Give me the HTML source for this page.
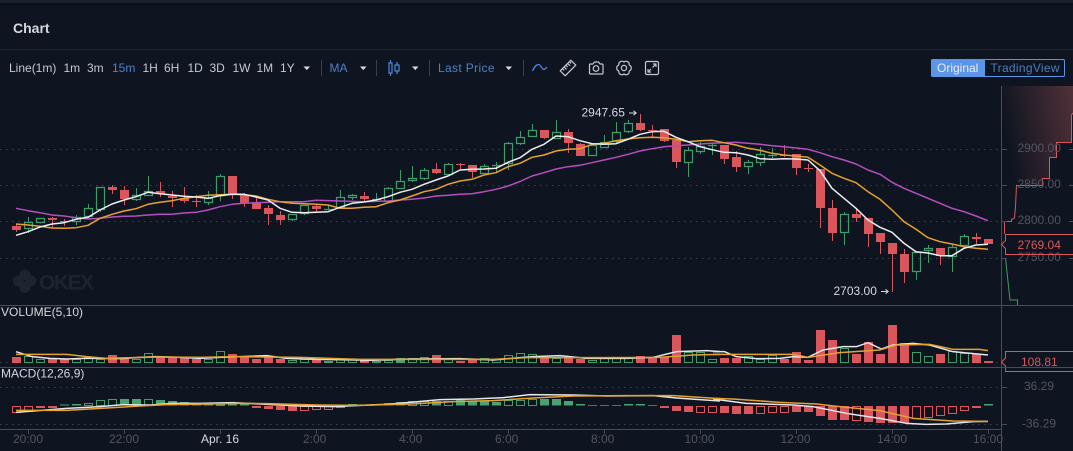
<!DOCTYPE html>
<html><head><meta charset="utf-8"><title>Chart</title>
<style>
html,body{margin:0;padding:0;background:#0f1520;width:1073px;height:451px;overflow:hidden}
svg{display:block}
text{font-family:"Liberation Sans",sans-serif;font-size:12px}
</style></head><body>
<svg width="1073" height="451" viewBox="0 0 1073 451" xmlns="http://www.w3.org/2000/svg">
<defs><linearGradient id="dg" gradientUnits="userSpaceOnUse" x1="1004" y1="125" x2="1073" y2="112"><stop offset="0" stop-color="#0f1520"/><stop offset="1" stop-color="#4d2f38"/></linearGradient></defs>
<rect width="1073" height="451" fill="#0f1520"/>
<rect width="1073" height="3" fill="#182130"/>
<rect y="3" width="1073" height="2" fill="#0c1119"/>
<rect y="49" width="1073" height="1" fill="#1e2532"/>
<text x="13" y="33" fill="#d5d8de" style="font-size:14px;font-weight:bold">Chart</text>

<!-- toolbar -->
<g fill="#c4c8cf">
<text x="9" y="72">Line(1m)</text><text x="63.5" y="72">1m</text><text x="87" y="72">3m</text>
<text x="112" y="72" fill="#4d80c8">15m</text><text x="142.5" y="72">1H</text><text x="164" y="72">6H</text>
<text x="187.5" y="72">1D</text><text x="209.5" y="72">3D</text><text x="232.5" y="72">1W</text><text x="256.5" y="72">1M</text><text x="280" y="72">1Y</text>
<text x="329.5" y="72" fill="#4d80c8">MA</text>
<text x="438" y="72" fill="#4d80c8" textLength="56.5">Last Price</text>
</g>
<g fill="#d8dbe0"><path d="M303.5 66.5h6.5l-3.2 3.6z"/><path d="M360 66.5h6.5l-3.2 3.6z"/><path d="M412 66.5h6.5l-3.2 3.6z"/><path d="M505.5 66.5h6.5l-3.2 3.6z"/></g>
<path d="M321.5 60v16M376.5 60v16M429.5 60v16M523.5 60v16" stroke="#3a404b" fill="none"/>
<g fill="none" stroke="#4d88d8" stroke-width="1.2">
<path d="M390.5 60v3M390.5 73v3M397 62v3M397 71v3"/><rect x="389" y="63" width="3" height="10"/><rect x="395" y="65" width="4" height="6"/>
<path d="M532.5 71C535 66 536.500 64.500 538.500 64.500C541 64.500 542 70 544 69.500C545.500 69 546 68 547 67" stroke-width="1.300"/>
</g>
<g fill="none" stroke="#c4c8cf" stroke-width="1.200" stroke-linejoin="round">
<g transform="rotate(-45 568 68)"><rect x="560.500" y="64.500" width="15" height="7"/><path d="M563.500 64.500v2.500M566 64.500v3.500M568.500 64.500v2.500M571 64.500v3.500M573.500 64.500v2.500"/></g>
<path d="M590.500 64h2.500l1.500-2h4l1.500 2h2a1 1 0 0 1 1 1v8a1 1 0 0 1-1 1h-11.500a1 1 0 0 1-1-1v-8a1 1 0 0 1 1-1z"/><circle cx="596" cy="68.500" r="2.800"/>
<path d="M624 62A3.200 3.200 0 0 1 629.200 65A3.200 3.200 0 0 1 629.200 71A3.200 3.200 0 0 1 624 74A3.200 3.200 0 0 1 618.800 71A3.200 3.200 0 0 1 618.800 65A3.200 3.200 0 0 1 624 62Z"/><circle cx="624" cy="68" r="2.600"/>
<rect x="645.500" y="61.500" width="13" height="13" rx="1.500"/><path d="M652.500 67.500l3.500-3.500M653 64h3v3M651 69l-3 3M648 69v3h3"/>
</g>

<!-- toggle -->
<rect x="931.500" y="59.500" width="133" height="17" rx="1.500" fill="none" stroke="#5a95e8"/>
<path d="M933 59h52v18h-52a2 2 0 0 1-2-2v-14a2 2 0 0 1 2-2z" fill="#5a95e8"/>
<text x="937" y="72" fill="#e8edf5">Original</text>
<text x="990.500" y="72" fill="#4d7cc0" textLength="69">TradingView</text>

<!-- grid -->
<g stroke="#3c424d" stroke-dasharray="1.500 4.500" fill="none">
<path d="M0 149.500H1001M0 185.500H1001M0 221.500H1001M0 258.500H1001M0 362.500H1001M0 387.500H1001M0 424.500H1001"/>
</g>

<!-- watermark -->
<g fill="#1e242f"><circle cx="25" cy="275" r="5.500"/><circle cx="18.500" cy="281" r="5.500"/><circle cx="31" cy="281" r="5.500"/><circle cx="25" cy="287.500" r="5.500"/></g>
<text x="39" y="289.500" fill="#1e242f" style="font-size:21px;font-weight:bold" textLength="55">OKEX</text>

<!-- depth -->
<path d="M1002 86H1073V113L1071.300 115V142.300H1056.700V157.700H1049V178.300H1042V185.700H1016.300L1016 206.700L1015 218L1011.700 219.300V221.300H1002Z" fill="url(#dg)"/>
<path d="M1004.500 234V221.500H1011.500V219.500L1014.500 218L1015.500 206.500L1016.500 185.500H1042.500V178.500H1049.500V157.500H1056.500V142.500H1071.500V115L1073 113" fill="none" stroke="#d9565c"/>
<path d="M1005.500 258L1007.500 277L1010 300H1017.500V305" fill="none" stroke="#3f9c68"/>

<!-- axes -->
<path d="M0 305.500H1073M0 367.500H1073M0 429.500H1001.500M1001.500 86V451" stroke="#474c56" fill="none"/>
<path d="M1001 149.500h6M1001 185.500h6M1001 221.500h6M1001 258.500h6M1001 387.500h6M1001 424.500h6M1069 149.500h4M1069 185.500h4M1069 221.500h4M1069 258.500h4M28.500 430v4M124.500 430v4M220.500 430v4M316.500 430v4M412.500 430v4M508.500 430v4M604.500 430v4M700.500 430v4M796.500 430v4M892.500 430v4M988.500 430v4" stroke="#474c56" fill="none"/>
<g fill="#50555f">
<text x="1017.500" y="152">2900.00</text><text x="1017.500" y="188">2850.00</text><text x="1017.500" y="224">2800.00</text><text x="1017.500" y="261">2750.00</text>
<text x="1024" y="390">36.29</text><text x="1022" y="427.500">-36.29</text>
<text x="13" y="443">20:00</text><text x="109" y="443">22:00</text><text x="303" y="443">2:00</text><text x="399" y="443">4:00</text><text x="495" y="443">6:00</text><text x="591" y="443">8:00</text><text x="684.500" y="443">10:00</text><text x="780.500" y="443">12:00</text><text x="877" y="443">14:00</text><text x="973" y="443">16:00</text>
</g>
<text x="201" y="443" fill="#d5d8de">Apr. 16</text>

<!-- candles -->
<path fill="#d9565c" d="M12 226h9v4h-9zM48 218h9v2h-9zM60 221h9v1h-9zM108 187h9v3h-9zM120 190h9v9h-9zM156 191h9v3h-9zM168 196h9v2h-9zM180 198h9v3h-9zM192 201h9v1h-9zM228 176h9v18h-9zM240 195h9v8h-9zM252 203h9v6h-9zM264 208h9v6h-9zM276 215h9v5h-9zM312 206h9v3h-9zM360 196h9v3h-9zM432 169h9v4h-9zM456 164h9v1h-9zM468 165h9v7h-9zM540 130h9v8h-9zM564 132h9v11h-9zM576 144h9v12h-9zM636 123h9v7h-9zM648 130h9v1h-9zM660 129h9v12h-9zM672 140h9v22h-9zM720 145h9v14h-9zM732 157h9v10h-9zM780 155h9v1h-9zM792 154h9v14h-9zM804 168h9v1h-9zM816 169h9v39h-9zM828 208h9v25h-9zM852 214h9v4h-9zM864 218h9v16h-9zM876 233h9v9h-9zM888 243h9v11h-9zM900 254h9v18h-9zM936 248h9v8h-9zM972 237h9v2h-9zM984 239h9v5h-9z"/>
<path fill="none" stroke="#d9565c" d="M16.500 224V232M52.500 217V228M64.500 219V226M112.500 185V194M124.500 186V205M160.500 182V197M172.500 191V207M184.500 187V203M196.500 195V207M232.500 176V199M244.500 193V207M256.500 197V209M268.500 205V225M280.500 211V225M316.500 204V212M364.500 192V202M436.500 163V174M460.500 163V169M472.500 165V178M544.500 130V139M568.500 129V153M580.500 143V156M640.500 114V131M652.500 125V137M664.500 129V142M676.500 140V168M724.500 145V164M736.500 151V172M784.500 145V157M796.500 154V175M808.500 164V172M820.500 169V228M832.500 200V241M856.500 209V222M868.500 218V247M880.500 233V254M892.500 243V292M904.500 249V283M940.500 248V265M976.500 233V244"/>
<path fill="none" stroke="#3f9c68" stroke-width="1.200" d="M24.500 222.500h8v6h-8zM36.500 218.500h8v4h-8zM72.500 217.500h8v4h-8zM84.500 208.500h8v8h-8zM96.500 187.500h8v22h-8zM132.500 195.500h8v4h-8zM144.500 191.500h8v4h-8zM204.500 198.500h8v4h-8zM216.500 176.500h8v19h-8zM288.500 214.500h8v5h-8zM300.500 205.500h8v8h-8zM324 209.500h9M336.500 197.500h8v10h-8zM348.500 195.500h8v2h-8zM372 199.500h9M384.500 188.500h8v13h-8zM396.500 181.500h8v7h-8zM408.500 178.500h8v2h-8zM420.500 170.500h8v8h-8zM444.500 164.500h8v10h-8zM480.500 166.500h8v7h-8zM492 165.500h9M504.500 143.500h8v20h-8zM516.500 137.500h8v6h-8zM528.500 130.500h8v6h-8zM552.500 132.500h8v6h-8zM588.500 145.500h8v10h-8zM600.500 142.500h8v5h-8zM612.500 132.500h8v9h-8zM624.500 123.500h8v8h-8zM684.500 150.500h8v12h-8zM696.500 146.500h8v5h-8zM708 145.500h9M744.500 162.500h8v4h-8zM756.500 154.500h8v8h-8zM768 155.500h9M840.500 214.500h8v18h-8zM912.500 252.500h8v19h-8zM924.500 248.500h8v2h-8zM948.500 247.500h8v9h-8zM960.500 236.500h8v9h-8z"/>
<path fill="none" stroke="#3f9c68" d="M28.500 217V222M28.500 229V233M40.500 223V223.500M76.500 215V217M76.500 222V225M88.500 204V208M100.500 210V212M136.500 188V195M136.500 200V201M148.500 176V191M208.500 191V198M208.500 203V205M220.500 174V176M220.500 196V201M292.500 220V221M304.500 214V215M328.500 206V210M340.500 190V197M340.500 208V209M352.500 194V195M352.500 198V200M376.500 193V202M388.500 187V188M388.500 202V203M400.500 170V181M412.500 166V178M412.500 181V182M424.500 168V170M424.500 179V180M448.500 163V164M448.500 175V176M484.500 164V166M496.500 162V172M508.500 142V143M508.500 164V170M520.500 131V137M520.500 144V145M532.500 124V130M556.500 120V132M592.500 143V145M604.500 135V142M616.500 122V132M616.500 142V143M628.500 120V123M628.500 132V133M688.500 147V150M688.500 163V177M700.500 142V146M700.500 152V154M712.500 143V155M748.500 160V162M748.500 167V174M760.500 147V154M760.500 163V166M772.500 148V158M844.500 212V214M844.500 233V245M916.500 272V280M928.500 245V248M928.500 251V263M952.500 245V247M952.500 257V272M964.500 234V236"/>

<!-- MA lines -->
<g fill="none" stroke-width="1.500" stroke-linejoin="round">
<polyline stroke="#b54fc0" points="16,208.300 28,210.700 40,212.700 52,215 64,216 76,217.700 88,219 100,218.300 112,217 124,216.300 136,216 148,215 160,214.300 172,214.300 184,213 196,212.300 208,210 220,206.700 232,204.300 244,203.300 256,202.700 268,202.300 280,201.700 304,201.700 316,200.300 340,201 364,201.700 388,201 400,200 412,199.300 424,198 436,196 448,195.300 460,194.300 472,193.700 484,191.700 496,189.300 508,186 520,181.500 532,176 544,172.700 556,169 568,166.700 580,165.300 592,162.700 604,160 616,157.300 628,154.300 640,151 652,148.700 664,146.700 676,145.700 688,145 700,144 712,143.300 724,142.700 736,142.300 748,143.300 760,144.300 772,145.700 784,146.700 796,148 808,149.300 820,152.700 832,156.700 844,160 856,164 868,170 880,174.300 892,182.300 904,188.300 916,193.300 928,198.300 940,203.300 952,208.300 964,211.700 976,216 988,220.700"/>
<polyline stroke="#e6a22e" points="16,224 28,225 40,226.300 52,228 64,228.300 76,227.700 88,225.300 100,218.300 112,214.300 124,211 136,208.700 148,204.300 160,202.300 172,200.700 184,198.300 196,196.700 208,195.300 220,194.700 232,194.300 244,194.700 256,196 268,199.300 280,201.700 292,203.300 304,203.700 316,204.300 328,205 340,208.300 352,208.300 364,207.300 376,206.700 388,202.700 400,200 412,196 424,191.700 436,189.300 448,184.300 460,181 472,179.300 484,175 496,172.700 508,166.700 520,163.300 532,157.300 544,155 556,151 568,149.300 580,148.700 592,144.300 604,143.300 616,140.700 628,139 640,137.700 652,137.300 664,137.700 676,139.300 688,141.700 700,140.700 712,140.300 724,142.700 736,145 748,148.300 760,150.300 772,153.300 784,155 796,156 808,157.300 820,165 832,173.300 844,178.300 856,182.700 868,191.700 880,199.300 892,210 904,221.700 916,229.300 928,237.700 940,241.700 952,244 964,246.700 976,248.300 988,249.300"/>
<polyline stroke="#eceef0" points="16,235.300 28,231.700 40,227 52,224 64,222.700 76,219.300 88,217.300 100,210 112,204 124,200 136,196.700 148,192.300 160,193.700 172,195 184,196.300 196,197 208,198.300 220,195.700 232,194.300 244,194.300 256,197 268,200 280,208.300 292,212.300 304,212.700 316,212.300 328,211.700 340,207.300 352,203.300 364,202 376,200 388,196.700 400,192.300 412,189.300 424,184.300 436,180 448,176 460,170 472,169.300 484,169 496,168.300 508,162.300 520,157.700 532,149.300 544,144.300 556,136 568,136.700 580,140.700 592,143.700 604,144.300 616,143.700 628,139.300 640,134.300 652,131.700 664,131.300 676,137.300 688,141.700 700,146.700 712,149.700 724,152.300 736,152.700 748,155 760,158.700 772,159.300 784,158.700 796,159 808,160 820,170.700 832,188.300 844,198.300 856,208.300 868,220 880,227.300 892,232.300 904,243.300 916,251.700 928,253 940,255.700 952,255.700 964,248.300 976,245 988,244.300"/>
</g>

<!-- annotations -->
<text x="581.500" y="116.500" fill="#d5d8de">2947.65</text>
<path d="M629 113h7M633.500 110.800l2.700 2.200l-2.700 2.200" fill="none" stroke="#d5d8de"/>
<text x="833.500" y="295" fill="#d5d8de">2703.00</text>
<path d="M881 291.500h7M885.500 289.300l2.700 2.200l-2.700 2.200" fill="none" stroke="#d5d8de"/>

<!-- price labels -->
<path d="M1073 234.500H1005.500V240.500L1001.500 244.500L1005.500 248.500V254.500H1073" fill="none" stroke="#d9565c"/>
<text x="1017.500" y="249" fill="#d9565c">2769.04</text>

<text x="1" y="316" fill="#d5d8de">VOLUME(5,10)</text>
<text x="1" y="377.500" fill="#d5d8de">MACD(12,26,9)</text>

<!-- volume bars -->
<path fill="#d9565c" d="M12 357h9v6h-9zM48 359h9v4h-9zM60 359h9v4h-9zM108 355h9v8h-9zM120 358h9v5h-9zM156 357h9v6h-9zM168 358h9v5h-9zM180 358h9v5h-9zM192 359h9v4h-9zM228 354h9v9h-9zM240 357h9v6h-9zM252 359h9v4h-9zM264 356h9v7h-9zM276 359h9v4h-9zM312 359h9v4h-9zM360 360h9v3h-9zM432 355h9v8h-9zM456 361h9v2h-9zM468 359h9v4h-9zM540 357h9v6h-9zM564 357h9v6h-9zM576 359h9v4h-9zM636 356h9v7h-9zM648 357h9v6h-9zM660 357h9v6h-9zM672 335h9v28h-9zM720 358h9v5h-9zM732 358h9v5h-9zM780 359h9v4h-9zM792 352h9v11h-9zM804 360h9v3h-9zM816 330h9v33h-9zM828 340h9v23h-9zM852 354h9v9h-9zM864 342h9v21h-9zM876 354h9v9h-9zM888 325h9v38h-9zM900 343h9v20h-9zM936 354h9v9h-9zM972 354h9v9h-9zM984 361h9v2h-9z"/>
<path fill="#4aa272" d="M324 361h9v2h-9zM396 358h9v5h-9z"/>
<path fill="none" stroke="#3f9c68" d="M24.500 356.500h8v6h-8zM36.500 359.500h8v3h-8zM72.500 359.500h8v3h-8zM84.500 357.500h8v5h-8zM96.500 359.500h8v3h-8zM132.500 359.500h8v3h-8zM144.500 353.500h8v9h-8zM204.500 359.500h8v3h-8zM216.500 351.500h8v11h-8zM288.500 360.500h8v2h-8zM300.500 359.500h8v3h-8zM336.500 359.500h8v3h-8zM348.500 359.500h8v3h-8zM372.500 361.500h8v1h-8zM384.500 360.500h8v2h-8zM408.500 358.500h8v4h-8zM420.500 357.500h8v5h-8zM444.500 359.500h8v3h-8zM480.500 358.500h8v4h-8zM492.500 359.500h8v3h-8zM504.500 355.500h8v7h-8zM516.500 353.500h8v9h-8zM528.500 354.500h8v8h-8zM552.500 358.500h8v4h-8zM588.500 360.500h8v2h-8zM600.500 358.500h8v4h-8zM612.500 357.500h8v5h-8zM624.500 358.500h8v4h-8zM684.500 352.500h8v10h-8zM696.500 352.500h8v10h-8zM708.500 359.500h8v3h-8zM744.500 356.500h8v6h-8zM756.500 359.500h8v3h-8zM768.500 355.500h8v7h-8zM840.500 348.500h8v14h-8zM912.500 352.500h8v10h-8zM924.500 356.500h8v6h-8zM948.500 351.500h8v11h-8zM960.500 353.500h8v9h-8z"/>
<!-- macd bars -->
<path fill="#d9565c" d="M36 406h9v2h-9zM48 406h9v2h-9zM252 406h9v2h-9zM264 406h9v3h-9zM276 406h9v4h-9zM288 406h9v5h-9zM336 406h9v2h-9zM660 406h9v2h-9zM672 406h9v5h-9zM684 406h9v6h-9zM720 406h9v7h-9zM732 406h9v8h-9zM744 406h9v8h-9zM792 406h9v6h-9zM804 406h9v6h-9zM816 406h9v10h-9zM828 406h9v14h-9zM840 406h9v14h-9zM864 406h9v16h-9zM876 406h9v17h-9zM888 406h9v17h-9zM900 406h9v17h-9zM972 406h9v2h-9z"/>
<path fill="none" stroke="#d9565c" d="M12.500 406.500h8v6h-8zM24.500 406.500h8v5h-8zM300.500 406.500h8v4h-8zM312.500 406.500h8v3h-8zM324.500 406.500h8v3h-8zM696.500 406.500h8v6h-8zM708.500 406.500h8v6h-8zM756.500 406.500h8v7h-8zM768.500 406.500h8v6h-8zM780.500 406.500h8v6h-8zM852.500 406.500h8v14h-8zM912.500 406.500h8v12h-8zM924.500 406.500h8v11h-8zM936.500 406.500h8v9h-8zM948.500 406.500h8v7h-8zM960.500 406.500h8v4h-8z"/>
<path fill="#4aa272" d="M60 404.500h9v1h-9zM72 404h9v1.500h-9zM120 399h9v6.500h-9zM132 399h9v6.500h-9zM156 400h9v5.500h-9zM168 401h9v4.500h-9zM180 402h9v3.500h-9zM192 403h9v2.500h-9zM204 404h9v1.500h-9zM228 403h9v2.500h-9zM240 403h9v2.500h-9zM348 404h9v1.500h-9zM360 404.500h9v1h-9zM372 404h9v1.500h-9zM384 403h9v2.500h-9zM396 402h9v3.500h-9zM432 401h9v4.500h-9zM456 400h9v5.500h-9zM468 401h9v4.500h-9zM480 401h9v4.500h-9zM492 402h9v3.500h-9zM540 399h9v6.500h-9zM552 399h9v6.500h-9zM564 401h9v4.500h-9zM576 404h9v1.500h-9zM588 405h9v.8h-9zM600 405h9v.8h-9zM612 405h9v.8h-9zM624 404h9v1.500h-9zM636 404h9v1.500h-9zM648 405h9v.8h-9zM984 404h9v1.500h-9z"/>
<path fill="none" stroke="#3f9c68" d="M84.500 403.500h8v2h-8zM96.500 400.500h8v5h-8zM108.500 399.500h8v6h-8zM144.500 399.500h8v6h-8zM216.500 404.500h8v1h-8zM408.500 401.500h8v4h-8zM420.500 401.500h8v4h-8zM444.500 401.500h8v4h-8zM504.500 400.500h8v5h-8zM516.500 400.500h8v5h-8zM528.500 399.500h8v6h-8z"/>

<!-- volume lines -->
<g fill="none" stroke-linejoin="round" stroke-width="4.500">
<g transform="translate(0 300) scale(.3333)">
<polyline stroke="#e4e6ea" points="48,155 96,170 150,175 200,177 250,175 300,175 360,176 420,172 470,170 540,172 600,175 660,172 720,170 800,167 860,175 950,178 1080,180"/>
<polyline stroke="#e6a22e" points="48,163 200,163 260,170 320,175 400,173 480,171 600,172 700,170 900,172 1080,178"/>
<polyline stroke="#e4e6ea" points="48,337 100,333 200,325 300,320 370,314 450,315 520,310 600,310 700,308 780,312 900,318 1000,320 1080,316"/>
<polyline stroke="#e6a22e" points="48,331 200,331 320,324 420,318 500,314 620,312 720,310 800,311 950,315 1080,316"/>
</g>
<g transform="translate(360 300) scale(.3333)">
<polyline stroke="#e4e6ea" points="0,182 60,180 150,177 300,176 400,180 480,173 520,170 600,167 680,175 800,175 880,172 950,155 1040,152 1080,155"/>
<polyline stroke="#e6a22e" points="0,178 200,178 400,178 500,173 700,173 900,172 1000,165 1080,163"/>
<polyline stroke="#e4e6ea" points="0,316 80,313 150,307 240,299 340,297 430,293 510,284 640,285 740,288 880,287 950,294 1020,299 1080,303"/>
<polyline stroke="#e6a22e" points="0,316 150,312 280,305 400,302 520,294 640,288 800,287 940,287 1080,296"/>
</g>
<g transform="translate(713 300) scale(.3333)">
<polyline stroke="#e4e6ea" points="0,155 35,155 70,170 130,176 200,175 240,170 285,172 330,150 390,140 430,140 465,128 505,147 540,135 600,130 650,135 720,155 825,165"/>
<polyline stroke="#e6a22e" points="0,163 240,163 285,172 380,158 500,150 550,135 650,133 720,148 800,148 825,152"/>
<polyline stroke="#e4e6ea" points="0,297 100,310 240,315 300,320 400,340 500,355 580,370 640,373 700,372 780,365 825,364"/>
<polyline stroke="#e6a22e" points="0,295 60,297 200,307 310,312 380,320 500,332 600,355 720,363 825,364"/>
</g>
</g>

<!-- volume label -->
<path d="M1073 351.500H1005.500V358L1001.500 362L1005.500 366V371.500H1073" fill="#0f1520" stroke="#d9565c"/>
<path d="M1005 367.500H1073" stroke="#474c56"/>
<text x="1021" y="366" fill="#d9565c">108.81</text>
</svg>
</body></html>
